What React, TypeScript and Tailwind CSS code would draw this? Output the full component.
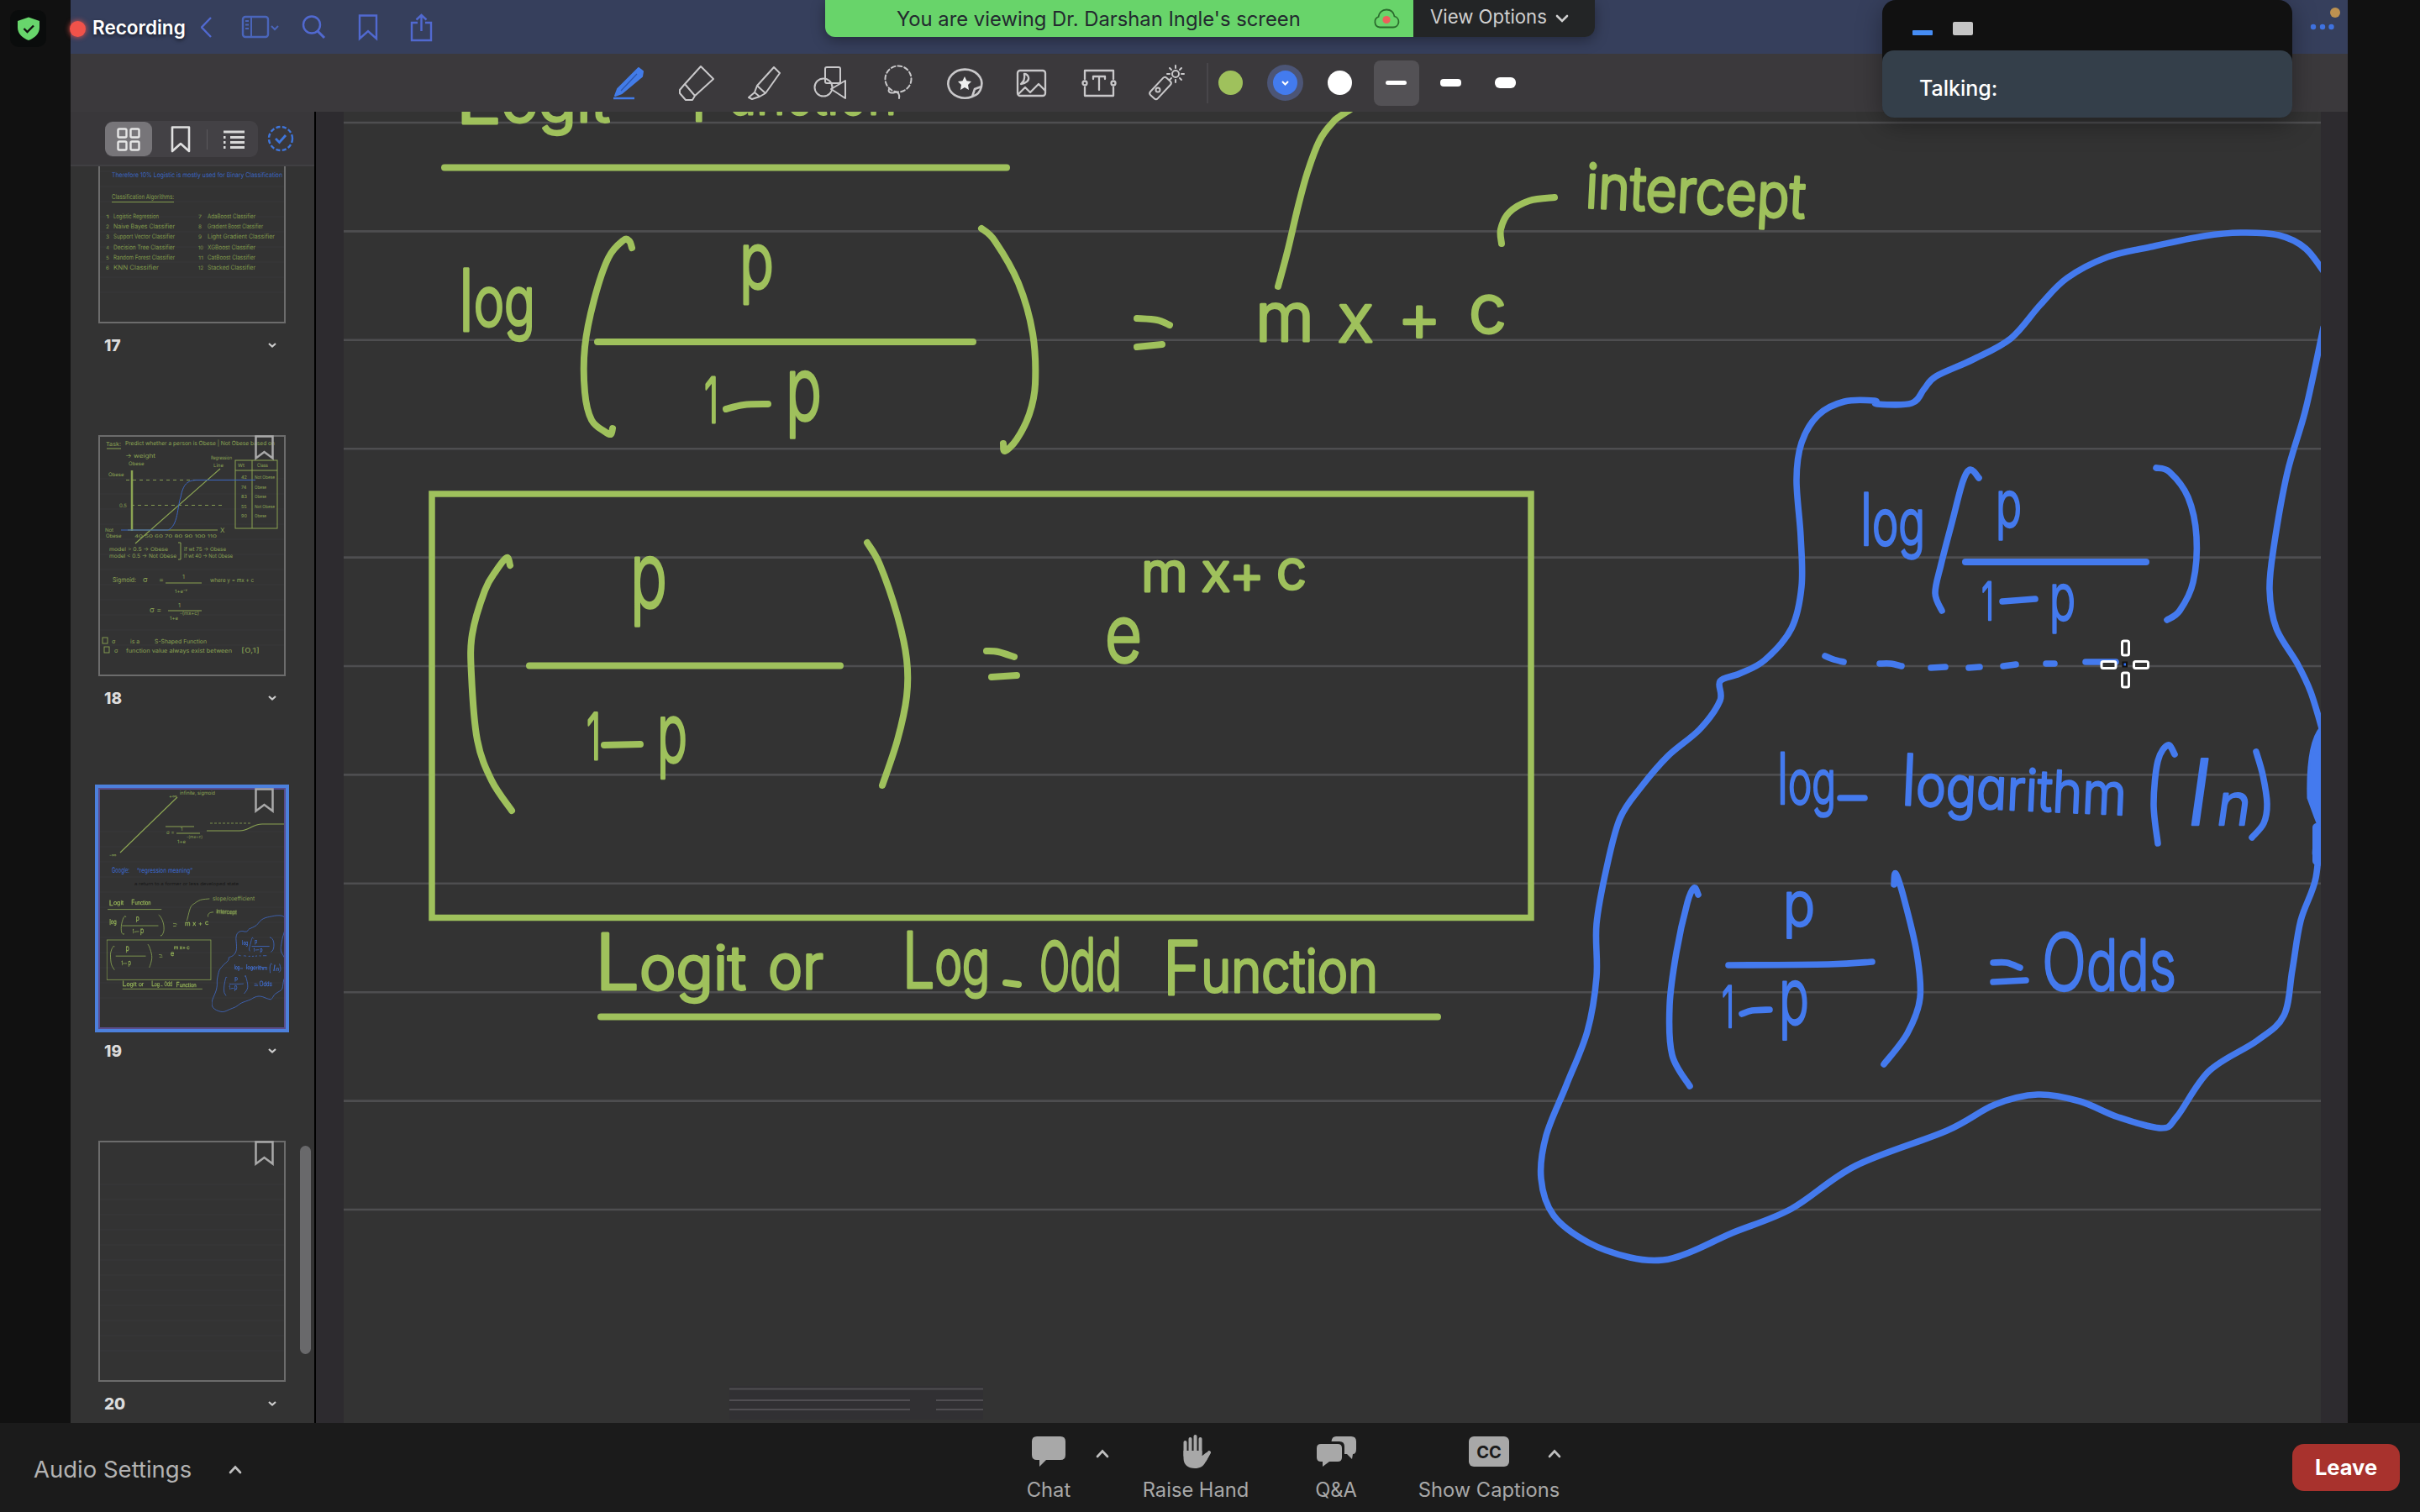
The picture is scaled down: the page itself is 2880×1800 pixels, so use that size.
import React from "react";

type Pt = [number, number];

/** Smooth open curve through the given points. */
function smooth(pts: Pt[]): string {
  let d = `M${pts[0][0]} ${pts[0][1]}`;
  for (let i = 0; i < pts.length - 1; i++) {
    const p0 = pts[i - 1] ?? pts[i];
    const p1 = pts[i];
    const p2 = pts[i + 1];
    const p3 = pts[i + 2] ?? p2;
    d += ` C${p1[0] + (p2[0] - p0[0]) / 6} ${p1[1] + (p2[1] - p0[1]) / 6} ${p2[0] - (p3[0] - p1[0]) / 6} ${p2[1] - (p3[1] - p1[1]) / 6} ${p2[0]} ${p2[1]}`;
  }
  return d;
}

const GREEN = "#9fc15c";
const BLUE = "#447aee";

const greenStrokes: Pt[][] = [
  [[752, 295], [749, 287], [742, 286], [724, 307], [707, 357], [696, 413], [696, 467], [704, 500], [720, 514], [727, 517], [729, 510]],
  [[1168, 272], [1184, 287], [1212, 337], [1229, 397], [1232, 457], [1225, 493], [1210, 523], [1196, 537], [1194, 528]],
  [[1353, 379], [1377, 381], [1392, 387]],
  [[1353, 413], [1383, 410]],
  [[1521, 341], [1532, 300], [1545, 245], [1556, 205], [1570, 168], [1585, 147], [1603, 133], [1690, 80], [1801, 65]],
  [[1787, 290], [1786, 273], [1796, 253], [1820, 239], [1850, 235]],
  [[607, 673], [603, 664], [590, 680], [577, 703], [562, 755], [561, 803], [568, 881], [585, 929], [609, 965]],
  [[1032, 646], [1047, 672], [1068, 733], [1079, 785], [1079, 829], [1068, 881], [1050, 935]],
  [[1174, 775], [1188, 776], [1207, 782]],
  [[1180, 806], [1210, 804]],
  [[864, 487], [885, 482], [914, 481]],
  [[719, 887], [762, 886]],
  [[1197, 1170], [1212, 1172]],
];

const blueStrokes: Pt[][] = [
  [[2770, 330], [2744, 296], [2712, 280], [2667, 277], [2623, 281], [2559, 294], [2508, 306], [2460, 331], [2428, 363], [2393, 403], [2348, 428], [2304, 448], [2290, 463], [2275, 480], [2234, 481], [2231, 477], [2195, 478], [2164, 494], [2144, 527], [2138, 571], [2143, 639], [2144, 698], [2132, 748], [2100, 786], [2070, 802], [2047, 811], [2047, 834], [2023, 868], [1985, 900], [1953, 937], [1928, 974], [1912, 1033], [1900, 1100], [1900, 1163], [1889, 1228], [1864, 1292], [1840, 1352], [1834, 1403], [1849, 1447], [1890, 1479], [1940, 1497], [1979, 1500], [2013, 1490], [2061, 1468], [2132, 1439], [2208, 1388], [2317, 1346], [2374, 1315], [2425, 1303], [2475, 1311], [2521, 1330], [2572, 1343], [2591, 1329], [2629, 1275], [2686, 1239], [2718, 1209], [2728, 1155], [2738, 1096], [2756, 1045], [2761, 980]],
  [[2765, 390], [2744, 487], [2722, 563], [2706, 651], [2701, 702], [2709, 748], [2734, 790], [2750, 824], [2764, 870]],
  [[2355, 569], [2345, 559], [2336, 573], [2323, 622], [2310, 672], [2303, 706], [2311, 727]],
  [[2566, 557], [2582, 562], [2604, 592], [2614, 639], [2610, 693], [2594, 727], [2579, 738]],
  [[2588, 898], [2580, 887], [2568, 906], [2563, 957], [2568, 1004]],
  [[2685, 895], [2693, 923], [2698, 957], [2694, 980], [2680, 997]],
  [[2021, 1065], [2016, 1057], [2008, 1075], [1995, 1134], [1987, 1197], [1990, 1256], [2011, 1293]],
  [[2254, 1053], [2256, 1040], [2266, 1070], [2281, 1134], [2285, 1188], [2270, 1230], [2242, 1267]],
  [[2372, 1146], [2388, 1146], [2404, 1152]],
  [[2372, 1169], [2411, 1167]],
  [[2057, 1149], [2176, 1148], [2228, 1145]],
  [[2073, 1207], [2085, 1203], [2106, 1202]],
  [[2190, 950], [2219, 950]],
  [[2383, 716], [2422, 713]],
  [[2172, 781], [2182, 785], [2194, 788]],
  [[2237, 790], [2250, 790], [2263, 793]],
  [[2298, 795], [2315, 794]],
  [[2343, 795], [2356, 794]],
  [[2384, 793], [2399, 791]],
  [[2435, 790], [2445, 790]],
  [[2482, 788], [2518, 788]],
];

const handFont = {
  fontFamily: "Inter, 'Open Sans', sans-serif",
  fontWeight: 300,
  fontFeatureSettings: "'cv11' 1",
  textRendering: "geometricPrecision",
} as const;

/** A handwritten word, fitted to the width it takes on the page. */
function Word({
  x, y, w, size, first, lift = 0, rot = 0, children,
}: { x: number; y: number; w: number; size: number; first?: number; lift?: number; rot?: number; children: string }) {
  return (
    <text
      transform={`translate(${x} ${y}) rotate(${rot})`}
      fontSize={size}
      textLength={w}
      lengthAdjust="spacingAndGlyphs"
    >
      {first ? <><tspan fontSize={first}>{children[0]}</tspan><tspan dy={-lift}>{children.slice(1)}</tspan></> : children}
    </text>
  );
}

/** All pen marks of the open page. */
function Ink() {
  return (
    <g strokeLinecap="round" strokeLinejoin="round">
      <g fill="none" stroke={GREEN} strokeWidth={8}>
        {greenStrokes.map((s, i) => <path key={i} d={smooth(s)} />)}
        <path d="M529 199.5H1198M711 407H1158M630 792.5H1000M715 1210.5H1711" />
        <rect x={514} y={588} width={1308} height={504.5} strokeWidth={7.5} strokeLinejoin="miter" />
      </g>
      <g fill={GREEN} stroke={GREEN} strokeWidth={3.2} style={handFont}>
        <Word x={542} y={147} w={184} size={72} first={92} lift={2}>Logit</Word>
        <Word x={822} y={144} w={245} size={72} first={92} lift={8}>Function</Word>
        <Word x={546} y={394} w={91} size={82} first={102} lift={6}>log</Word>
        <Word x={880} y={343} w={41} size={92}>p</Word>
        <Word x={838} y={503} w={17} size={74}>1</Word>
        <Word x={935} y={500} w={43} size={104}>p</Word>
        <text fontSize={80} x="1494 1592 1663 1748" y="406 407 406 396">mx+c</text>
        <Word x={1886} y={247} w={262} size={72} rot={2.8}>intercept</Word>
        <Word x={750} y={723} w={44} size={108}>p</Word>
        <Word x={698} y={904} w={17} size={76}>1</Word>
        <Word x={782} y={907} w={36} size={96}>p</Word>
        <Word x={1315} y={788} w={44} size={94}>e</Word>
        <text fontSize={64} x="1358 1430 1463 1519" y="704 704 706 701">mx+c</text>
        <Word x={708} y={1178} w={180} size={72} first={92}>Logit</Word>
        <Word x={914} y={1177} w={66} size={74}>or</Word>
        <Word x={1074} y={1176} w={104} size={74} first={92} lift={4}>Log</Word>
        <Word x={1237} y={1179} w={98} size={86} first={80}>Odd</Word>
        <Word x={1384} y={1184} w={256} size={70} first={88} lift={3}>Function</Word>
      </g>
      <g fill="none" stroke={BLUE} strokeWidth={7.6}>
        {blueStrokes.map((s, i) => <path key={i} d={smooth(s)} />)}
        <path d="M2339 669H2554" strokeWidth={8} />
        <path d="M2762 866C2750 880 2746 910 2747 950L2755 972L2762 990M2756 1000C2752 1012 2752 1024 2760 1030" fill={BLUE} strokeWidth={3} />
        <path d="M2755 900V955M2757 985V1025" strokeWidth={10} />
      </g>
      <g fill={BLUE} stroke={BLUE} strokeWidth={2.6} style={handFont}>
        <Word x={2214} y={649} w={77} size={76} first={86}>log</Word>
        <Word x={2375} y={627} w={31} size={76}>p</Word>
        <Word x={2358} y={738} w={15} size={62}>1</Word>
        <Word x={2439} y={738} w={31} size={76}>p</Word>
        <Word x={2115} y={957} w={70} size={72} first={84}>log</Word>
        <Word x={2262} y={958} w={268} size={68} first={84} rot={2.6}>logarithm</Word>
        <g transform="translate(2600 982) skewX(-8)"><text fontSize={108}>l<tspan x={36} fontSize={68}>n</tspan></text></g>
        <Word x={2122} y={1102} w={38} size={72}>p</Word>
        <Word x={2049} y={1223} w={15} size={68}>1</Word>
        <Word x={2117} y={1219} w={36} size={92}>p</Word>
        <Word x={2430} y={1179} w={160} size={84} first={94}>Odds</Word>
      </g>
    </g>
  );
}

function PageCanvas() {
  const rules = Array.from({ length: 11 }, (_, i) => 146 + i * 129.4);
  return (
    <svg className="block h-[1561px] w-[2353px] bg-[#333333]" viewBox="409 133 2353 1561">
      {rules.map((y) => <line key={y} x1={409} x2={2762} y1={y} y2={y} stroke="#4e4e50" strokeWidth={2.6} />)}
      <Ink />
      <g stroke="#504e52" strokeWidth={2}>
        <rect x={868} y={1650} width={302} height={40} fill="#313033" stroke="none" />
        <path d="M868 1653.5H1170M868 1667H1083M1114 1667H1170M868 1678H1083M1114 1678H1170" />
      </g>
      <g fill="#333" stroke="#fff" strokeWidth={3}>
        <rect x={2525.5} y={763} width={8} height={17} rx={2} />
        <rect x={2525.5} y={801} width={8} height={17} rx={2} />
        <rect x={2501} y={787.5} width={17} height={8} rx={2} />
        <rect x={2539.5} y={787.5} width={17} height={8} rx={2} />
        <rect x={2526.5} y={788.5} width={4.5} height={5} fill="#2f6ff0" stroke="#111" strokeWidth={2} />
      </g>
    </svg>
  );
}

/* ---------- toolbar icons ---------- */

const line = { fill: "none", stroke: "#c9c8ca", strokeWidth: 2, strokeLinejoin: "round", strokeLinecap: "round" } as const;

const toolIcons: React.ReactNode[] = [
  <g key="pen"><path d="M33 3 38 7 37 13 13 33 5 36 8 28Z" fill="#437ce8" stroke="#437ce8" strokeWidth={2} strokeLinejoin="round" /><path d="M3 39H28" stroke="#437ce8" strokeWidth={2.5} /><path d="M31 10 12 30" stroke="#2c56ac" strokeWidth={1.2} /></g>,
  <g key="eraser" {...line}><path d="M27 1 42 16 20 36 8 22ZM8 22 2 29V33L9 41H17L20 36" /></g>,
  <g key="marker" {...line}><path d="M34 2 41 9 24 33 14 24ZM14 24 11 32 17 37 24 33M11 32 4 38 8 40 17 37" /></g>,
  <g key="shapes" {...line}><rect x={15} y={2} width={18} height={19} rx={2} /><circle cx={13} cy={26} r={10.5} /><path d="M22 28 39 18V39Z" /></g>,
  <g key="lasso" {...line} strokeDasharray="5 3"><circle cx={22} cy={16} r={15.5} /><path d="M11 28c-2 5 4 5 7 4 4-1 6 3 5 7" strokeDasharray="none" /></g>,
  <g key="sticker" {...line} strokeWidth={2.6}><path d="M42 25A20 17 0 1 0 31 37L34 28ZM31 37C38 35 41 30 42 25" /><path d="m22 13 2.5 5.3 5.5.7-4 4 1 6-5-3-5 3 1-6-4-4 5.5-.7Z" fill="#eee" stroke="none" /></g>,
  <g key="image" {...line} strokeWidth={2.3}><rect x={5} y={6} width={33} height={30} rx={3} /><path d="M13 10c1 7-1 9-4 12 6-1 10-4 9-8-1-3-3-4-5-4ZM6 34l8-8 6 6 10-10 8 8" /></g>,
  <g key="text" {...line} strokeWidth={2.3}><path d="M5 16V6H39V16M5 26V36H39V26M15 16V13H29V16M22 13V29" /><circle cx={5} cy={21} r={2.5} /><circle cx={39} cy={21} r={2.5} /></g>,
  <g key="laser" {...line}><rect x={-6} y={-14} width={12} height={28} rx={3} transform="translate(15 27) rotate(43)" /><circle cx={12} cy={29} r={2.5} /><circle cx={33} cy={10} r={4} /><path d="M33 0V3M33 17V20M23 10H26M40 10H43M26 3l2 2M38 15l2 2M26 17l2-2M38 5l2-2" /></g>,
];

function Toolbar() {
  return (
    <div className="flex h-[69px] items-center bg-[#3b393c] pl-[625px]">
      {toolIcons.map((icon, i) => (
        <div key={i} className="flex w-[79.9px] justify-center">
          <svg className="h-[42px] w-[44px] overflow-visible" viewBox="0 0 44 42">{icon}</svg>
        </div>
      ))}
      <div className="ml-[8px] h-12 w-[2px] bg-[#48464a]" />
      <div className="ml-[-6px] flex w-[65px] justify-center"><div className="size-[29px] rounded-full bg-[#9fc15c]" /></div>
      <div className="flex w-[65px] justify-center">
        <div className="flex size-[43px] items-center justify-center rounded-full bg-[#4c5576]">
          <div className="flex size-[29px] items-center justify-center rounded-full bg-[#437bee]">
            <svg className="h-[6px] w-[9px]" viewBox="0 0 9 6"><path d="M1 1 4.5 4.5 8 1" fill="none" stroke="#fff" strokeWidth={2} /></svg>
          </div>
        </div>
      </div>
      <div className="flex w-[65px] justify-center"><div className="size-[29px] rounded-full bg-white" /></div>
      <div className="ml-[2px] flex w-[65px] justify-center">
        <div className="flex h-[54px] w-[54px] items-center justify-center rounded-lg bg-[#535155]"><div className="h-[5px] w-[25px] rounded-sm bg-white" /></div>
      </div>
      <div className="flex w-[65px] justify-center"><div className="h-[9px] w-[25px] rounded-[4px] bg-white" /></div>
      <div className="flex w-[65px] justify-center"><div className="h-[13px] w-[25px] rounded-[6px] bg-white" /></div>
    </div>
  );
}

function TitleBar() {
  return (
    <div className="flex h-16 items-start bg-[#363f5c]">
      <div className="mt-[25px] -ml-px size-[19px] shrink-0 rounded-full bg-[#f0524a] shadow-[0_0_6px_#f0524a]" />
      <div className="mt-[19px] ml-2 w-[129px] shrink-0 text-[22.5px] leading-[28px] font-semibold text-white [text-shadow:0_2px_4px_rgba(0,0,0,0.6)]">Recording</div>
      <svg className="mt-[14px] h-9 w-[280px] shrink-0" viewBox="239 14 280 36" fill="none" stroke="#5169d0" strokeWidth={2.4}>
        <path d="M251 21 240 32.5 251 44" />
        <rect x={289} y={20} width={30} height={24} rx={3} stroke="#4a65ba" />
        <path d="M299 20V44M292 25H296M292 29.5H296M292 34H296M323 31l4 4 4-4" stroke="#4a65ba" strokeWidth={2} />
        <circle cx={371} cy={29.5} r={10} /><path d="M378 37 386 45" strokeWidth={3} />
        <path d="M428 18.5H448V46L438 37 428 46Z" />
        <path d="M497 27H490V48H513V27H506M501.5 37V18M495.5 23.5 501.5 18 507.5 23.5" />
      </svg>
      <svg className="ml-auto h-12 w-[50px] shrink-0" viewBox="2744 0 50 48">
        <circle cx={2753} cy={32} r={3.2} fill="#3f72e0" /><circle cx={2764} cy={32} r={3.2} fill="#3f72e0" /><circle cx={2774.5} cy={32} r={3.2} fill="#3f72e0" />
        <circle cx={2779} cy={15} r={6} fill="#bd9150" />
      </svg>
    </div>
  );
}

/* ---------- sidebar ---------- */

/** Tiny line of a page preview, squeezed to its drawn width. */
function Tiny({ x, y, w, size = 7, fill, children }: { x: number; y: number; w: number; size?: number; fill?: string; children: string }) {
  return <text x={x} y={y} fontSize={size} textLength={w} lengthAdjust="spacingAndGlyphs" fill={fill}>{children}</text>;
}

const previewFont = { textRendering: "geometricPrecision" } as const;

function Thumb17() {
  const left = ["Logistic Regression", "Naive Bayes Classifier", "Support Vector Classifier", "Decision Tree Classifier", "Random Forest Classifier", "KNN Classifier"];
  const right = ["AdaBoost Classifier", "Gradient Boost Classifier", "Light Gradient Classifier", "XGBoost Classifier", "CatBoost Classifier", "Stacked Classifier"];
  return (
    <g fill="#809a4c" style={previewFont}>
      <Tiny x={133} y={211} w={203} size={8} fill="#3c66c0">Therefore 10% Logistic is mostly used for Binary Classification</Tiny>
      <Tiny x={133} y={237} w={74} size={8}>Classification Algorithms:</Tiny>
      <path d="M133 240.5H207" stroke="#809a4c" />
      {left.map((t, i) => (
        <g key={t}>
          <Tiny x={126} y={260 + i * 12.2} w={4} size={6}>{String(i + 1)}</Tiny>
          <Tiny x={135} y={260 + i * 12.2} w={i === 0 || i === 5 ? 54 : 73} size={7.5}>{t}</Tiny>
        </g>
      ))}
      {right.map((t, i) => (
        <g key={t}>
          <Tiny x={236} y={260 + i * 12.2} w={i > 2 ? 6 : 4} size={6}>{String(i + 7)}</Tiny>
          <Tiny x={247} y={260 + i * 12.2} w={i === 1 ? 66 : i === 2 ? 80 : 57} size={7.5}>{t}</Tiny>
        </g>
      ))}
    </g>
  );
}

function Thumb18() {
  return (
    <g fill="#8ba453" fontSize={7} style={previewFont}>
      <Tiny x={126} y={531} w={18}>Task:</Tiny><path d="M127 534H144" stroke="#8ba453" />
      <Tiny x={149} y={530} w={178}>Predict whether a person is Obese | Not Obese based on</Tiny>
      <Tiny x={149} y={545} w={36}>→ weight</Tiny>
      <text x={153} y={554} fontSize={6}>Obese</text>
      <text x={129} y={567} fontSize={6}>Obese</text>
      <text x={142} y={604} fontSize={6}>0.5</text>
      <text x={125} y={633} fontSize={6}>Not</text><text x={126} y={640} fontSize={6}>Obese</text>
      <Tiny x={251} y={547} w={25} size={6}>Regression</Tiny><text x={254} y={556} fontSize={6}>Line</text>
      <g fill="none" stroke="#8ba453">
        <path d="M157 560V632" strokeWidth={2.5} /><path d="M152 631H259M161 647 262 558M197 694H240M200 727H240" strokeWidth={1.2} />
        <path d="M150 571.5H250M156 601.500H268" strokeDasharray="4 4" strokeWidth={0.9} />
        <rect x={280} y={548} width={50} height={81} /><path d="M280 560H330M300 548V629" />
        <path d="M144 631H200C212 626 211 603 215 592C218 576 223 572 234 571.5H304" stroke="#3c66c0" />
        <path d="M212 646h3v20h-3" />
      </g>
      <Tiny x={160} y={640} w={98} size={5}>40 50 60 70 80 90 100 110</Tiny>
      <text x={262} y={634} fontSize={8}>X</text>
      <text x={283} y={556} fontSize={6}>Wt</text><Tiny x={306} y={556} w={13} size={6}>Class</Tiny>
      {["Not Obese", "Obese", "Obese", "Not Obese", "Obese"].map((t, i) => (
        <g key={i}><text x={287} y={570 + i * 11.5} fontSize={5.5}>{[42, 74, 83, 55, 90][i]}</text><Tiny x={303} y={570 + i * 11.5} w={t.length > 6 ? 24 : 14} size={5.5}>{t}</Tiny></g>
      ))}
      <Tiny x={130} y={656} w={70} size={6.5}>model &gt; 0.5 → Obese</Tiny><Tiny x={219} y={656} w={50} size={6.5}>if wt 75 → Obese</Tiny>
      <Tiny x={130} y={664} w={80} size={6.5}>model &lt; 0.5 → Not Obese</Tiny><Tiny x={219} y={664} w={58} size={6.5}>if wt 40 → Not Obese</Tiny>
      <Tiny x={134} y={693} w={28} size={8}>Sigmoid:</Tiny><text x={170} y={693} fontSize={9}>σ</text><text x={189} y={693} fontSize={9}>=</text><text x={217} y={689}>1</text><text x={208} y={706} fontSize={6}>1+e⁻ʸ</text><Tiny x={250} y={693} w={52}>where y = mx + c</Tiny>
      <text x={178} y={729} fontSize={9}>σ =</text><text x={212} y={723}>1</text><text x={202} y={738} fontSize={6}>1+e</text><text x={214} y={732} fontSize={6}>-(mx+c)</text>
      <g fill="none" stroke="#8ba453" strokeWidth={0.9}><rect x={122} y={759} width={6} height={7} /><rect x={124} y={770} width={6} height={7} /></g>
      <text x={133} y={766}>σ</text><text x={155} y={766}>is a</text><Tiny x={184} y={766} w={62}>S-Shaped Function</Tiny>
      <text x={136} y={777}>σ</text><Tiny x={150} y={777} w={126}>function value always exist between</Tiny><Tiny x={287} y={777} w={22} size={8}>[0,1]</Tiny>
    </g>
  );
}

function Thumb19() {
  return (
    <g fontSize={7} fill="#8ba453" style={previewFont}>
      <path d="M143 1015 211 949M197 984H231M246 989H285C297 989 300 981 312 981H340M210 992H238" stroke="#8ba453" fill="none" strokeWidth={1.2} />
      <path d="M250 980H300" stroke="#8ba453" strokeDasharray="3 2" strokeWidth={0.8} />
      <text x={201} y={950} fontSize={6}>+∞</text><Tiny x={214} y={946} w={42} size={6}>infinite, sigmoid</Tiny><text x={130} y={1020} fontSize={6}>-∞</text>
      <text x={198} y={993} fontSize={6}>σ =</text><text x={215} y={989} fontSize={6}>1</text><text x={211} y={1004} fontSize={6}>1+e</text><text x={222} y={998} fontSize={5}>-(mx+c)</text>
      <Tiny x={133} y={1039} w={21} size={9} fill="#3c6cd4">Google:</Tiny><Tiny x={163} y={1039} w={66} size={8} fill="#3c6cd4">“regression meaning”</Tiny>
      <Tiny x={160} y={1054} w={124} size={5.5} fill="#161616">a return to a former or less developed state</Tiny>
      <Tiny x={253} y={1072} w={50}>slope/coefficient</Tiny>
      <g transform="translate(127 1119) scale(0.0947 0.0937) translate(-513 -588)" opacity={0.9}><Ink /></g>
    </g>
  );
}

function PageThumb({ n, children, selected, bookmark = true }: { n: number; children?: React.ReactNode; selected?: boolean; bookmark?: boolean }) {
  const top = 98 + (n - 17) * 420;
  return (
    <div className="h-[420px] shrink-0">
      <div className={selected ? "relative ml-[33px] h-[287px] w-[223px] border-2 border-[#5a4d8c] outline-4 outline-[#4c80dc]" : "relative ml-[33px] h-[287px] w-[223px] border-2 border-[#6c6c6c]"}>
        <svg className="block h-[283px] w-[219px]" viewBox={`119 ${top + 2} 219 283`}>
          {Array.from({ length: 12 }, (_, i) => <line key={i} x1={119} x2={338} y1={top + 52 + i * 18} y2={top + 52 + i * 18} stroke="#38383a" />)}
          {children}
        </svg>
        {bookmark && (
          <svg className="absolute -top-[2px] right-[12px] h-[30px] w-[23px]" viewBox="0 0 23 30"><path d="M1.5 1.5H21.5V27.5L11.5 20 1.5 27.5Z" fill="none" stroke="#a9a9a9" strokeWidth={2.5} /></svg>
        )}
      </div>
      <div className="mt-[14px] flex h-[26px] items-center justify-between pr-[45px] pl-[40px]">
        <span className="text-[19px] leading-[26px] font-extrabold text-[#dcdcdc]">{n}</span>
        <svg className="mt-[-2px] h-[6px] w-[10px]" viewBox="0 0 10 6"><path d="M1 1 5 4.5 9 1" fill="none" stroke="#ccc" strokeWidth={2.2} /></svg>
      </div>
    </div>
  );
}

function Sidebar() {
  return (
    <div className="relative flex h-[1561px] w-[290px] shrink-0 flex-col bg-[#333333]">
      <div className="flex h-[65px] items-start border-b-2 border-[#403f42] bg-[#39373a] pt-[11px] pl-[41px]">
        <div className="flex h-[43px] w-[182px] items-center rounded-[9px] bg-[#434145]">
          <div className="flex h-[41px] w-[56px] items-center justify-center rounded-[9px] bg-[#777579]">
            <svg className="size-7" viewBox="0 0 28 28" fill="none" stroke="#e6e6e6" strokeWidth={2.4}><rect x={1.5} y={1.5} width={10} height={10} rx={1.5} /><rect x={16.5} y={1.5} width={10} height={10} rx={1.5} /><rect x={1.5} y={16.5} width={10} height={10} rx={1.5} /><rect x={16.5} y={16.5} width={10} height={10} rx={1.5} /></svg>
          </div>
          <svg className="ml-[22px] h-8 w-6" viewBox="0 0 24 32"><path d="M2 1.5H22V30L12 21 2 30Z" fill="none" stroke="#e0e0e0" strokeWidth={2.6} strokeLinejoin="round" /></svg>
          <div className="ml-[19px] h-6 w-px bg-[#5a585c]" />
          <svg className="ml-[18px] h-6 w-[26px]" viewBox="0 0 26 24" stroke="#d8d8d8" strokeWidth={2.8}><path d="M1 3H26M9 9.5H26M9 15.5H26M1 21.5H3.5M9 21.5H26M1 9.5H3.5M1 15.5H3.5" /></svg>
        </div>
        <svg className="mt-[5px] ml-[11px] size-8" viewBox="0 0 32 32" fill="none" stroke="#3f76dc" strokeWidth={2.4}><circle cx={16} cy={16} r={14} strokeDasharray="5 2.5" /><path d="m10 16 4.5 4.5L22 12" strokeWidth={2.8} /></svg>
      </div>
      <div className="flex h-[1496px] flex-col justify-start overflow-hidden">
        <div className="-mt-[100px]">
          <PageThumb n={17} bookmark={false}><Thumb17 /></PageThumb>
          <PageThumb n={18}><Thumb18 /></PageThumb>
          <PageThumb n={19} selected><Thumb19 /></PageThumb>
          <PageThumb n={20} />
        </div>
      </div>
      <div className="absolute top-[1231px] right-[4px] h-[248px] w-[13px] rounded-full bg-[#69696b]" />
    </div>
  );
}

/* ---------- meeting chrome ---------- */

function Caret({ className }: { className: string }) {
  return <svg className={className} viewBox="0 0 16 11"><path d="M2 9 8 2.5 14 9" fill="none" stroke="#c0c0c0" strokeWidth={2.6} strokeLinecap="round" /></svg>;
}

function Control({ label, children, className }: { label: string; children: React.ReactNode; className: string }) {
  return (
    <div className={`flex flex-col items-center ${className}`}>
      <svg className="h-[42px] w-[50px]" viewBox="0 0 50 42" fill="#a8a8a8">{children}</svg>
      <span className="mt-[9px] text-[23.7px] leading-[32px] whitespace-nowrap text-[#a8a8a8]">{label}</span>
    </div>
  );
}

function Footer() {
  return (
    <div className="flex h-[106px] items-start bg-[#1b1b1b]">
      <div className="mt-[37px] ml-[40px] w-[232px] shrink-0 text-[27.5px] leading-[36px] text-[#b3b3b3]">Audio Settings</div>
      <Caret className="mt-[50px] h-[11px] w-4" />
      <Control label="Chat" className="mt-[13px] ml-[920px] w-[80px]">
        <path d="M11 3H39Q45 3 45 9V25Q45 31 39 31H22L14 39V31H11Q5 31 5 25V9Q5 3 11 3Z" />
      </Control>
      <Caret className="mt-[31px] ml-[16px] h-[11px] w-4" />
      <Control label="Raise Hand" className="mt-[13px] ml-[37px] w-[132px]">
        <g fill="none" stroke="#a8a8a8" strokeWidth={4} strokeLinecap="round"><path d="M12.5 10V26M18.5 6V24M24.5 3V24M30.5 6V24M41 22 36 31" /></g>
        <path d="M10.5 20H32.5V26C36 24 38 20 43 22L37 33C34 39 30 41 24 41C16 41 10.5 37 10.5 29Z" />
      </Control>
      <Control label="Q&A" className="mt-[13px] ml-[65px] w-[72px]">
        <path d="M25 3H43Q49 3 49 9V18Q49 24 45 24L44 30 38 24H35V15Q35 9 29 9H19.5Q20 3 25 3Z" />
        <path d="M7 12H27Q32 12 32 17V28Q32 33 27 33H17L9 39V33H7Q2 33 2 28V17Q2 12 7 12Z" />
      </Control>
      <Control label="Show Captions" className="mt-[13px] ml-[51px] w-[190px]">
        <rect x={1} y={3} width={48} height={36} rx={6} />
        <text x={25} y={29} textAnchor="middle" fill="#1b1b1b" fontSize={20} fontWeight={700}>CC</text>
      </Control>
      <Caret className="mt-[31px] ml-[-25px] h-[11px] w-4" />
      <div className="mt-[25px] mr-6 ml-auto flex h-[56px] w-[128px] items-center justify-center rounded-[14px] bg-[#a8322d] text-[25.5px] font-bold text-white">Leave</div>
    </div>
  );
}

export default function App() {
  return (
    <div className="relative h-[1800px] w-[2880px] overflow-hidden bg-[#111111] font-['Inter',sans-serif]">
      <div className="flex h-[1694px]">
        <div className="w-[84px] shrink-0 pt-3 pl-3">
          <div className="flex h-11 w-[43px] items-center justify-center rounded-[10px] bg-[#0a0c0c]">
            <svg className="h-[28px] w-[26px]" viewBox="0 0 26 28"><path d="M13 0.5 26 5V13C26 20 20 25.5 13 28 6 25.5 0 20 0 13V5Z" fill="#68d66c" /><path d="m7.5 14 4 4L19 10.5" fill="none" stroke="#111" strokeWidth={2.4} /></svg>
          </div>
        </div>
        <div className="flex w-[2710px] shrink-0 flex-col">
          <TitleBar />
          <Toolbar />
          <div className="flex">
            <Sidebar />
            <div className="w-[35px] shrink-0 border-l-2 border-black bg-[#2d2b2f]" />
            <PageCanvas />
            <div className="w-8 shrink-0 bg-[#2d2b2f]" />
          </div>
        </div>
      </div>
      <Footer />

      <div className="absolute top-0 left-[982px] flex h-11 w-[916px] overflow-hidden rounded-b-[12px] shadow-[0_4px_16px_rgba(0,0,0,0.35)]">
        <div className="flex w-[700px] items-center bg-[#68d46a]">
          <span className="w-[652px] pl-[85px] text-[23.8px] leading-[43px] whitespace-nowrap text-[#23292f]">You are viewing Dr. Darshan Ingle's screen</span>
          <svg className="h-6 w-8" viewBox="0 0 32 24"><path d="M8 22.5A6.5 6.5 0 0 1 6.5 10C7 5 11 1.5 16 1.5S24.5 4.5 25.5 9.5A6.6 6.6 0 0 1 24 22.5Z" fill="none" stroke="#2b6b2d" strokeWidth={1.8} /><circle cx={16} cy={13.5} r={4.6} fill="#ee5f5b" /></svg>
        </div>
        <div className="flex flex-1 items-start bg-[#232526] pl-[20px]">
          <span className="w-[149px] text-[22.2px] leading-[39px] whitespace-nowrap text-[#d0d0d0]">View Options</span>
          <svg className="mt-[17px] h-[10px] w-4" viewBox="0 0 16 10"><path d="M2 2 8 8 14 2" fill="none" stroke="#d0d0d0" strokeWidth={2.6} strokeLinecap="round" /></svg>
        </div>
      </div>

      <div className="absolute top-0 left-[2240px] w-[488px] rounded-[16px] bg-[#111111] shadow-[0_8px_30px_rgba(0,0,0,0.35)]">
        <div className="flex h-[60px] items-start pl-9">
          <div className="mt-9 h-[6px] w-6 rounded-[1px] bg-[#468df5]" />
          <div className="mt-[26px] ml-6 h-4 w-6 rounded-[2px] bg-[#c5c5c5]" />
        </div>
        <div className="h-20 rounded-[14px] bg-[#343f4a] pt-[29px] pl-11 text-[25px] leading-[32px] font-medium text-white">Talking:</div>
      </div>
    </div>
  );
}
